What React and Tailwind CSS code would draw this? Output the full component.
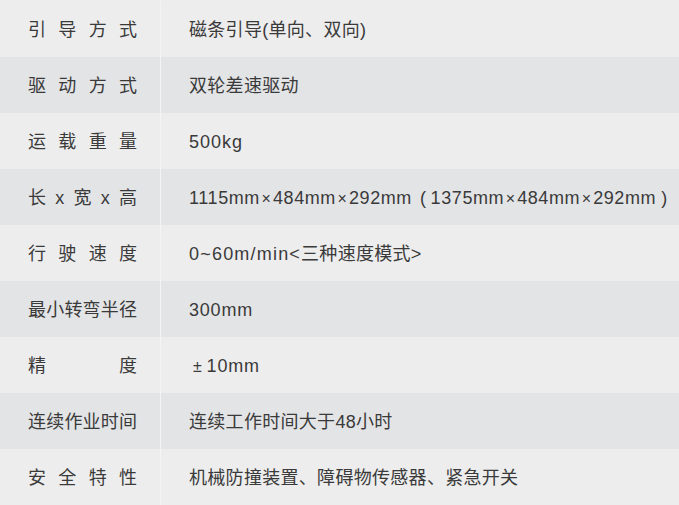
const rows = [
  { label: ['引', '导', '方', '式'], value: '磁条引导(单向、双向)' },
  { label: ['驱', '动', '方', '式'], value: '双轮差速驱动' },
  { label: ['运', '载', '重', '量'], value: <span className="tracking-[1px]">500kg</span> },
  {
    label: ['长', 'x', '宽', 'x', '高'],
    value: (
      <span className="tracking-[0.6px]">
        1115mm<span className="px-[1.5px] text-[16px]">×</span>484mm<span className="px-[1.5px] text-[16px]">×</span>292mm
        <span className="ml-[8px] mr-[4px]">(</span>1375mm<span className="px-[1.5px] text-[16px]">×</span>484mm
        <span className="px-[1.5px] text-[16px]">×</span>292mm<span className="ml-[5px]">)</span>
      </span>
    ),
  },
  {
    label: ['行', '驶', '速', '度'],
    value: (
      <>
        <span className="tracking-[1.2px]">0~60m/min&lt;</span>三种速度模式&gt;
      </>
    ),
  },
  { label: ['最', '小', '转', '弯', '半', '径'], value: <span className="tracking-[0.8px]">300mm</span> },
  {
    label: ['精', '度'],
    value: (
      <span className="tracking-[0.8px]">
        <span className="pl-[4px] pr-[4px] text-[16px]">±</span>10mm
      </span>
    ),
  },
  { label: ['连', '续', '作', '业', '时', '间'], value: '连续工作时间大于48小时' },
  { label: ['安', '全', '特', '性'], value: '机械防撞装置、障碍物传感器、紧急开关' },
];

export default function App() {
  return (
    <div
      className="w-[679px] h-[505px] bg-[#ededed] pt-px text-[#3a3a3a] text-[18px] overflow-hidden"
      style={{ fontFamily: '"Liberation Sans", "Noto Sans CJK SC", sans-serif' }}
    >
      {rows.map((row, i) => (
        <div
          key={i}
          className={`flex h-[56px] pt-[2px] ${i % 2 === 0 ? 'bg-[#ededed]' : 'bg-[#e3e4e6]'}`}
        >
          <div className="w-[161px] flex-shrink-0 border-r border-[#f4f4f4] -mt-[2px] pt-[2px] flex items-center pl-[28px] pr-[23px]">
            <div className="w-full flex justify-between">
              {row.label.map((c, j) => (
                <span key={j}>{c}</span>
              ))}
            </div>
          </div>
          <div className="flex-1 flex items-center pl-[28px] whitespace-nowrap tracking-[0.3px]">
            {row.value}
          </div>
        </div>
      ))}
    </div>
  );
}
